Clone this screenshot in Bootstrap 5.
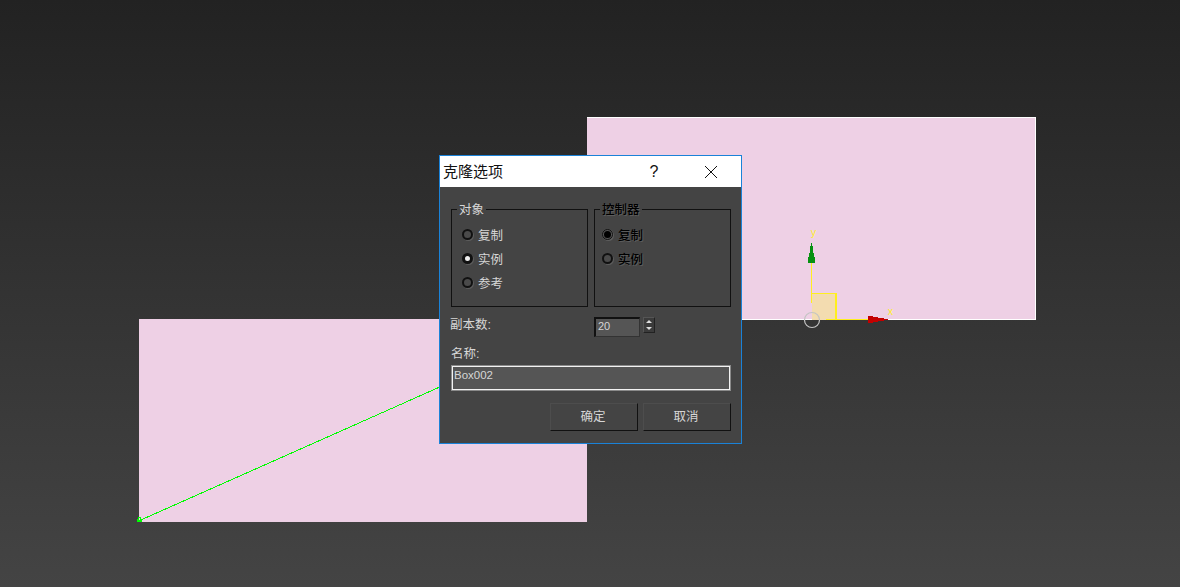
<!DOCTYPE html>
<html lang="zh">
<head>
<meta charset="utf-8">
<title>克隆选项</title>
<link rel="stylesheet" href="https://cdn.jsdelivr.net/npm/bootstrap@5.3.0/dist/css/bootstrap.min.css">
<style>
html,body{height:100%;margin:0;overflow:hidden}
body{font-family:"Liberation Sans","Noto Sans CJK SC",sans-serif;font-size:12px;line-height:1}
.viewport{position:relative;width:1180px;height:587px;background:linear-gradient(#222222,#444444);overflow:hidden}
.plane{position:absolute;background:#eed0e5}
.plane-top{left:587px;top:117px;width:449px;height:203px;border:solid #fff;border-width:1px 1px 1px 0}
.plane-bottom{left:139px;top:319px;width:448px;height:203px}
.overlay{position:absolute;left:0;top:0}
.clone-dialog{position:absolute;left:439px;top:155px;width:303px;height:289px;border:1px solid #1a82d8;background:#444;color:#d6d6d6}
.title-row{height:31px;background:#fff;color:#111;font-size:15px;padding-left:3px}
.title-text{width:200px}
.title-help{width:22px;font-size:16px;text-align:center}
.title-close{margin-left:39px}
.dialog-inner{padding:16px 10px 0 11px}
.group-row{gap:6px}
.opt-group{width:137px;height:104px;border:1px solid #111;padding:0 0 0 10px;margin:0;min-width:0}
.opt-group-right{padding-left:7px}
.opt-legend{float:none;width:auto;font-size:12.5px;line-height:13px;padding:0 2px;margin:0 0 7px -5px;color:#d6d6d6;transform:translateY(1px)}
.opt-group-right .opt-legend{margin-left:-2px}
.opt-legend-dark,.opt-label-dark{color:#000;font-weight:500;text-shadow:1px 1px 0 #5c5c5c}
.opt-row{height:24px;gap:5px}
.opt-radio{appearance:none;-webkit-appearance:none;width:11px;height:11px;margin:0;border-radius:50%;background:#4a4a4a;border:2px solid #111;box-shadow:1px 1px 0 #5c5c5c;flex:none;position:relative;top:-1px}
.opt-radio.on-light{background:#eee;border-width:3px}
.opt-radio.on-dark{background:#000;border:2px solid #555;outline:1px solid #111;outline-offset:-1px}
.opt-label{font-size:12.5px;padding-top:2px}
.copies-row{margin-top:10px;height:20px}
.copies-label{width:144px;margin-left:-1px;font-size:12.5px;margin-top:-3px}
.spin-input{width:46px;height:20px;background:#555;color:#d6d6d6;border:2px solid #555;border-top-color:#111;border-left-color:#111;border-bottom:1px solid #333;border-right:1px solid #333;font-size:11px;line-height:14px;padding:0 0 0 2px}
.spin-btns{width:12px;height:16px;margin-left:3px;margin-bottom:4px;background:#3b3b3b;border:1px solid #222;border-top-color:#555;border-left-color:#555;gap:4px}
.tri-up,.tri-down{width:0;height:0;border-left:3px solid transparent;border-right:3px solid transparent}
.tri-up{border-bottom:3px solid #ddd}
.tri-down{border-top:3px solid #ddd}
.name-label{font-size:12.5px;margin-top:11px;height:14px}
.name-input{width:280px;height:26px;margin-top:3px;background:#555;color:#d6d6d6;border:2px solid #f2f2f2;outline:1px solid #8a8a8a;outline-offset:-1px;font-size:11.5px;line-height:14px;padding:1px 0 0 1px}
.btn-row{margin-top:12px;gap:5px}
.max-btn{width:88px;height:28px;padding:0 2px 0 0;border-radius:0;background:#444;color:#d6d6d6;border:1px solid #111;border-top-color:#4d4d4d;border-left-color:#4d4d4d;font-size:12.5px;line-height:1}
.max-btn:hover{background:#444;color:#d6d6d6;border-color:#111}
.axis-label{font-family:"Liberation Mono",monospace;font-size:10px;fill:#ffef1e}
</style>
</head>
<body>
<div class="viewport">
  <div class="plane plane-top"></div>
  <div class="plane plane-bottom"></div>
  <svg class="overlay" width="1180" height="587" viewBox="0 0 1180 587" fill="none" shape-rendering="crispEdges">
    <line x1="138.500" y1="521" x2="441" y2="386.500" stroke="#00ff00" stroke-width="1"/>
    <path d="M137.500 521.500h4v-2h-1v-2h-2v2h-1z" stroke="#00ff00" stroke-width="1"/>
    <rect x="812" y="294" width="24" height="26" fill="#f3dcb0"/>
    <rect x="811" y="263" width="1" height="40" fill="#ffef1e"/>
    <rect x="811" y="293" width="26" height="1" fill="#ffef1e"/>
    <rect x="826" y="319" width="42" height="1" fill="#ffef1e"/>
    <rect x="835" y="293" width="2" height="27" fill="#ffef1e"/>
    <path d="M808 263V257h1v-4h1v-7h1v-3h1v3h1v7h1v4h1v6z" fill="#079112"/>
    <path d="M868 316h5v1h5v1h6v1h4v1h-4v1h-6v1h-5v1h-5z" fill="#c40000"/>
    <circle cx="812" cy="320" r="7.500" stroke="#c4c4c4" stroke-width="1.200" shape-rendering="auto"/>
    <text class="axis-label" x="810.500" y="236">y</text>
    <text class="axis-label" x="887.500" y="315">x</text>
  </svg>
  <div class="clone-dialog">
    <div class="title-row d-flex align-items-center">
      <span class="title-text">克隆选项</span>
      <span class="title-help">?</span>
      <svg class="title-close" width="14" height="14" viewBox="0 0 14 14" fill="none"><path d="M1 1L13 13M13 1L1 13" stroke="#111" stroke-width="1"/></svg>
    </div>
    <div class="dialog-inner">
      <div class="group-row d-flex">
        <fieldset class="opt-group">
          <legend class="opt-legend">对象</legend>
          <div class="opt-row d-flex align-items-center"><input class="opt-radio" type="radio" name="obj"><span class="opt-label">复制</span></div>
          <div class="opt-row d-flex align-items-center"><input class="opt-radio on-light" type="radio" name="obj"><span class="opt-label">实例</span></div>
          <div class="opt-row d-flex align-items-center"><input class="opt-radio" type="radio" name="obj"><span class="opt-label">参考</span></div>
        </fieldset>
        <fieldset class="opt-group opt-group-right">
          <legend class="opt-legend opt-legend-dark">控制器</legend>
          <div class="opt-row d-flex align-items-center"><input class="opt-radio on-dark" type="radio" name="ctl"><span class="opt-label opt-label-dark">复制</span></div>
          <div class="opt-row d-flex align-items-center"><input class="opt-radio" type="radio" name="ctl"><span class="opt-label opt-label-dark">实例</span></div>
        </fieldset>
      </div>
      <div class="copies-row d-flex align-items-center">
        <span class="copies-label">副本数:</span>
        <div class="spin-input">20</div>
        <div class="spin-btns d-flex flex-column align-items-center justify-content-center"><span class="tri-up"></span><span class="tri-down"></span></div>
      </div>
      <div class="name-label">名称:</div>
      <div class="name-input">Box002</div>
      <div class="btn-row d-flex justify-content-end">
        <button type="button" class="btn max-btn">确定</button>
        <button type="button" class="btn max-btn">取消</button>
      </div>
    </div>
  </div>
</div>
<script src="https://cdn.jsdelivr.net/npm/bootstrap@5.3.0/dist/js/bootstrap.bundle.min.js"></script>
</body>
</html>
